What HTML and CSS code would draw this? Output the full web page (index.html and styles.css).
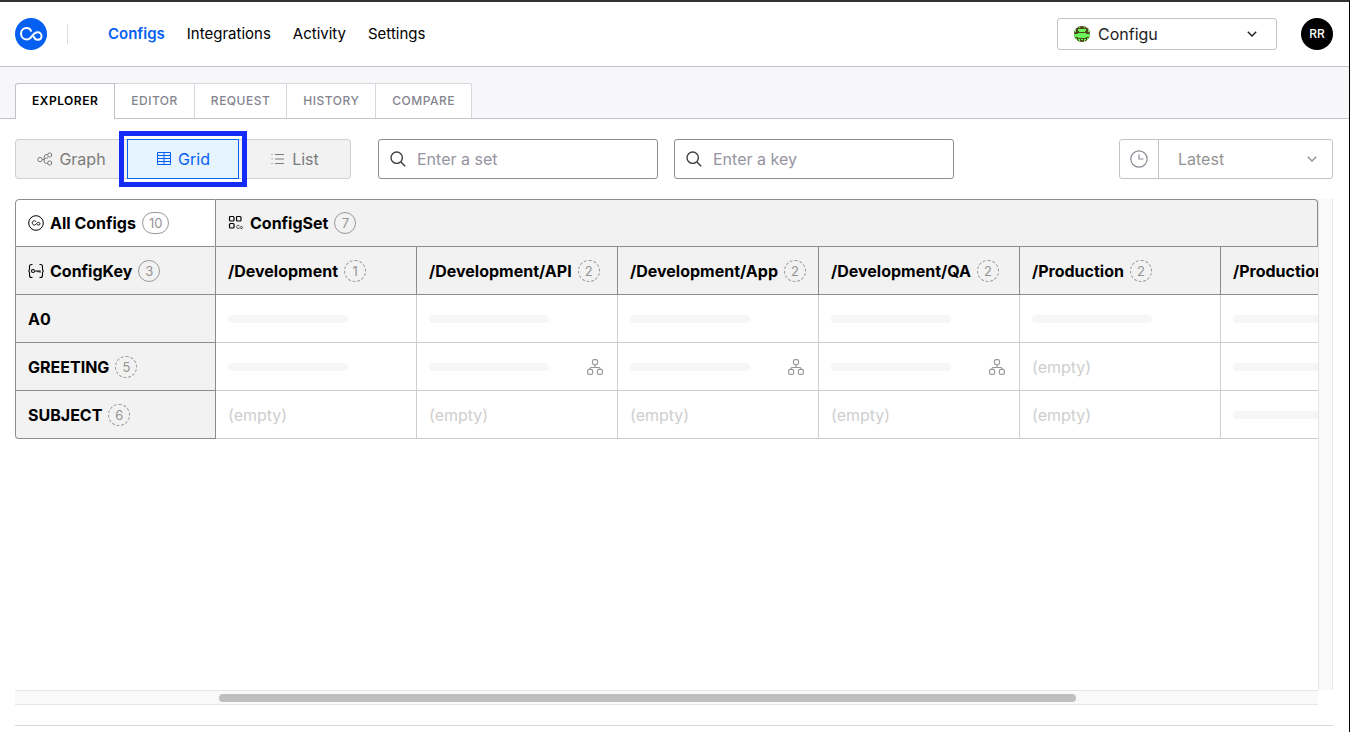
FILE: index.html
```html
<!DOCTYPE html>
<html lang="en">
<head>
<meta charset="utf-8">
<meta name="viewport" content="width=device-width, initial-scale=1">
<title>Configu - Explorer</title>
<link rel="stylesheet" href="styles.css">
</head>
<body>
<svg class="defs" aria-hidden="true">
  <symbol id="loop" viewBox="0 0 32 32">
    <path d="M16 12.800C15.300 11 13.600 10 11.600 10C8.300 10 6 12.500 6 15.600C6 19 8.500 21.600 12 21.600C17 21.600 17.500 14.200 22.500 14.200C25 14.200 26.500 16 26.500 18C26.500 20.200 24.900 21.800 22.800 21.800C20.900 21.800 19.500 20.700 19 19"/>
  </symbol>
  <symbol id="tree" viewBox="0 0 16 16">
    <g fill="none" stroke="currentColor" stroke-width="1.200" stroke-linejoin="round"><rect x="5.500" y=".6" width="5" height="5" rx="1.500"/><rect x=".6" y="10.400" width="5" height="5" rx="1.500"/><rect x="10.400" y="10.400" width="5" height="5" rx="1.500"/><path d="M8 5.500V8.500M3 10.500V9.500Q3 8.500 4 8.500H12Q13 8.500 13 9.500V10.500"/></g>
  </symbol>
  <symbol id="search" viewBox="0 0 16 16">
    <g fill="none" stroke="currentColor" stroke-width="1.400"><circle cx="6.700" cy="6.700" r="5.700"/><path d="M10.900 10.900L15.200 15.200"/></g>
  </symbol>
  <symbol id="chevron" viewBox="0 0 10 10">
    <path d="M.8 2.800L5 7L9.200 2.800" fill="none" stroke="currentColor" stroke-width="1.500"/>
  </symbol>
</svg>

<header class="topbar">
  <a class="brand" href="#" aria-label="Configu home"><svg class="brand-loop" viewBox="0 0 32 32"><use href="#loop"/></svg></a>
  <nav class="nav" aria-label="Main">
    <a class="nav-link active" href="#">Configs</a>
    <a class="nav-link" href="#">Integrations</a>
    <a class="nav-link" href="#">Activity</a>
    <a class="nav-link" href="#">Settings</a>
  </nav>
  <div class="org">
    <svg class="org-icon" viewBox="0 0 16 16" aria-hidden="true">
      <clipPath id="round"><circle cx="8" cy="8" r="8"/></clipPath>
      <g clip-path="url(#round)"><rect width="16" height="16" fill="#4e4a1d"/><path fill="#6bf75c" d="M5 1h1v1H5zM10 1h1v1h-1zM4 3h8v2h-1v1H5V5H4zM1 4h1v2H1zM14 4h1v2h-1zM0 8h4V7h8v1h4v3h-4v1H4v-1H0zM1 12h2v2H1zM13 12h2v2h-2zM4 13h2v3H5v-2H4zM10 13h2v1h-1v2h-1zM7 13h2v1H7z"/></g>
    </svg>
    <select class="org-select" aria-label="Organization"><option>Configu</option></select>
    <svg class="chevron" viewBox="0 0 10 10" aria-hidden="true"><use href="#chevron"/></svg>
  </div>
  <button class="avatar" type="button" aria-label="Account RR">RR</button>
</header>

<nav class="tabs" aria-label="Config views">
  <a class="tab active" href="#">Explorer</a>
  <a class="tab" href="#">Editor</a>
  <a class="tab" href="#">Request</a>
  <a class="tab" href="#">History</a>
  <a class="tab" href="#">Compare</a>
</nav>

<main class="main">
  <div class="toolbar">
    <div class="segments">
      <button class="segment" type="button">
        <svg class="icon" viewBox="0 0 16 16" aria-hidden="true"><g fill="none" stroke="currentColor"><circle cx="3" cy="8.500" r="2.200"/><circle cx="12.700" cy="4" r="2.100"/><circle cx="12.700" cy="12" r="2.100"/><path d="M5.200 8.500H7.200M10.600 3.500H9.500Q7.200 3.500 7.200 6V10Q7.200 12.500 9.500 12.500H10.600M7.200 8.500Q7.500 7 9.500 7H11"/></g></svg>Graph
      </button>
      <div class="focus-wrap">
        <button class="segment selected" type="button" aria-pressed="true">
          <svg class="icon" viewBox="0 0 16 16" aria-hidden="true"><path d="M1.500 1.500h13v12h-13zM1.500 4.500h13M1.500 7.500h13M1.500 10.500h13M8 1.500v12" fill="none" stroke="currentColor"/></svg>Grid
        </button>
        <span class="focus-ring"></span>
      </div>
      <button class="segment" type="button">
        <svg class="icon" viewBox="0 0 16 16" aria-hidden="true"><path d="M5 3.500h9M5 8h9M5 12.500h9" fill="none" stroke="currentColor" stroke-width="1.200"/><path d="M1.500 3.500h1M1.500 8h1M1.500 12.500h1" fill="none" stroke="currentColor"/></svg>List
      </button>
    </div>
    <label class="search"><svg class="icon" viewBox="0 0 16 16" aria-hidden="true"><use href="#search"/></svg><input class="search-input" type="text" placeholder="Enter a set" aria-label="Enter a set"></label>
    <label class="search"><svg class="icon" viewBox="0 0 16 16" aria-hidden="true"><use href="#search"/></svg><input class="search-input" type="text" placeholder="Enter a key" aria-label="Enter a key"></label>
    <div class="version">
      <span class="version-icon"><svg class="clock" viewBox="0 0 18 18" aria-hidden="true"><g fill="none" stroke="currentColor" stroke-width="1.200"><circle cx="9" cy="9" r="8.200"/><path d="M9 4.500V9H13.500"/></g></svg></span>
      <select class="version-select" aria-label="Version"><option>Latest</option></select>
      <svg class="chevron" viewBox="0 0 10 10" aria-hidden="true"><use href="#chevron"/></svg>
    </div>
  </div>

  <section class="viewer" aria-label="Config grid">
    <div class="viewport">
      <table class="grid">
        <colgroup><col class="col"><col class="col"><col class="col"><col class="col"><col class="col"><col class="col"><col></colgroup>
        <thead>
          <tr>
            <th class="all" scope="col"><div class="cell"><svg class="icon" viewBox="0 0 16 16" aria-hidden="true"><circle cx="8" cy="8" r="7.300" fill="none" stroke="currentColor"/><svg class="mini-loop" x="2" y="2" width="12" height="12" viewBox="0 0 32 32"><use href="#loop"/></svg></svg>All Configs<span class="count solid">10</span></div></th>
            <th scope="colgroup" colspan="6"><div class="cell"><svg class="icon" viewBox="0 0 16 16" aria-hidden="true"><g fill="none" stroke="currentColor" stroke-width="1.200"><rect x="1.500" y="1.500" width="4.500" height="4.500" rx="1"/><rect x="8.500" y="1.500" width="4.500" height="4.500" rx="1"/><rect x="1.500" y="8.500" width="4.500" height="4.500" rx="1"/></g><svg class="mini-loop" x="7" y="7.500" width="9" height="9" viewBox="0 0 32 32"><use href="#loop"/></svg></svg>ConfigSet<span class="count solid">7</span></div></th>
          </tr>
          <tr>
            <th scope="col"><div class="cell"><svg class="icon" viewBox="0 0 16 16" aria-hidden="true"><g fill="none" stroke="currentColor" stroke-width="1.100"><path d="M4.500 1.500H3.500Q1.500 1.500 1.500 3.500V6.500L.8 8L1.500 9.500V12.500Q1.500 14.500 3.500 14.500H4.500M11.500 1.500H12.500Q14.500 1.500 14.500 3.500V6.500L15.200 8L14.500 9.500V12.500Q14.500 14.500 12.500 14.500H11.500"/><path d="M6.500 7.300Q5.800 6.500 5 6.500Q3.500 6.500 3.500 8Q3.500 9.500 5 9.500Q6.300 9.500 7 8H12V9.700M10 8V9.300"/></g></svg>ConfigKey<span class="count solid">3</span></div></th>
            <th scope="col"><div class="cell">/Development<span class="count">1</span></div></th>
            <th scope="col"><div class="cell">/Development/API<span class="count">2</span></div></th>
            <th scope="col"><div class="cell">/Development/App<span class="count">2</span></div></th>
            <th scope="col"><div class="cell">/Development/QA<span class="count">2</span></div></th>
            <th scope="col"><div class="cell">/Production<span class="count">2</span></div></th>
            <th scope="col"><div class="cell">/Production</div></th>
          </tr>
        </thead>
        <tbody>
          <tr>
            <th scope="row"><div class="cell">A0</div></th>
            <td><div class="cell"><span class="bar"></span></div></td>
            <td><div class="cell"><span class="bar"></span></div></td>
            <td><div class="cell"><span class="bar"></span></div></td>
            <td><div class="cell"><span class="bar"></span></div></td>
            <td><div class="cell"><span class="bar"></span></div></td>
            <td><div class="cell"><span class="bar"></span></div></td>
          </tr>
          <tr>
            <th scope="row"><div class="cell">GREETING<span class="count">5</span></div></th>
            <td><div class="cell"><span class="bar"></span></div></td>
            <td><div class="cell"><span class="bar"></span><svg class="tree" viewBox="0 0 16 16" aria-hidden="true"><use href="#tree"/></svg></div></td>
            <td><div class="cell"><span class="bar"></span><svg class="tree" viewBox="0 0 16 16" aria-hidden="true"><use href="#tree"/></svg></div></td>
            <td><div class="cell"><span class="bar"></span><svg class="tree" viewBox="0 0 16 16" aria-hidden="true"><use href="#tree"/></svg></div></td>
            <td><div class="cell">(empty)</div></td>
            <td><div class="cell"><span class="bar"></span></div></td>
          </tr>
          <tr>
            <th scope="row"><div class="cell">SUBJECT<span class="count">6</span></div></th>
            <td><div class="cell">(empty)</div></td>
            <td><div class="cell">(empty)</div></td>
            <td><div class="cell">(empty)</div></td>
            <td><div class="cell">(empty)</div></td>
            <td><div class="cell">(empty)</div></td>
            <td><div class="cell"><span class="bar"></span></div></td>
          </tr>
        </tbody>
      </table>
    </div>
    <div class="track-y"></div>
    <div class="track-x"><div class="thumb"></div></div>
  </section>
</main>
</body>
</html>
```
FILE: styles.css
```css
* { box-sizing: border-box; }

body {
  margin: 0;
  min-height: 100vh;
  display: flex;
  flex-direction: column;
  border-top: 2px solid #333233;
  border-right: 1px solid #000;
  background: #fff;
  color: #000;
  font: 16px/24px Inter, "Liberation Sans", sans-serif;
}

a { color: inherit; text-decoration: none; }
button, input, select { font: inherit; color: inherit; }
svg { flex: none; }
.defs { position: absolute; width: 0; height: 0; }
.icon, .tree { width: 16px; height: 16px; }
.chevron { width: 10px; height: 10px; pointer-events: none; }

.topbar {
  height: 65px;
  display: flex;
  align-items: center;
  padding: 0 16px 0 15px;
  border-bottom: 1px solid #c3c2cb;
}
.brand {
  width: 32px;
  height: 32px;
  border-radius: 50%;
  background: #0560f2;
}
.brand-loop {
  display: block;
  fill: none;
  stroke: #fff;
  stroke-width: 2;
  stroke-linecap: round;
}
.mini-loop { fill: none; stroke: currentColor; stroke-width: 2.5; }
.nav {
  display: flex;
  gap: 22px;
  margin-left: 20px;
  padding-left: 40px;
  font-size: 15px;
  line-height: 20px;
  border-left: 1px solid #dcdbe0;
}
.nav-link.active { color: #0560f2; font-weight: 600; }
.org {
  width: 220px;
  height: 32px;
  margin-left: auto;
  display: flex;
  align-items: center;
  gap: 8px;
  padding: 0 19px 0 16px;
  border: 1px solid #c3c2cb;
  border-radius: 3px;
  color: #222;
}
.org-icon { width: 16px; height: 16px; }
.org-select, .version-select {
  flex: 1;
  min-width: 0;
  padding: 0;
  border: 0;
  outline: 0;
  appearance: none;
  background: transparent;
}
.avatar {
  width: 32px;
  height: 32px;
  margin-left: 24px;
  padding: 0;
  border: 0;
  border-radius: 50%;
  background: #000;
  color: #fff;
  font-size: 12px;
  font-weight: 500;
}

.tabs {
  height: 52px;
  display: flex;
  align-items: flex-end;
  padding: 0 15px;
  border-bottom: 1px solid #c3c2cb;
  background: #f7f7fa;
}
.tab {
  height: 35px;
  padding: 0 16px;
  border: 1px solid #d8d7de;
  border-width: 1px 1px 0 0;
  background: #fff;
  color: #85848e;
  font-size: 12px;
  font-weight: 500;
  line-height: 34px;
  letter-spacing: 0.5px;
  text-transform: uppercase;
}
.tab:last-child { border-top-right-radius: 3px; }
.tab.active {
  height: 36px;
  margin-bottom: -1px;
  border-color: #c3c2cb;
  border-left-width: 1px;
  border-radius: 3px 0 0 0;
  color: #000;
  font-weight: 600;
}

.main {
  flex: 1;
  display: flex;
  flex-direction: column;
  gap: 20px;
  margin: 0 16px 6px 15px;
  padding: 20px 0;
  border-bottom: 1px solid #d9d9d9;
}
.toolbar { display: flex; align-items: center; }
.segments {
  width: 336px;
  display: grid;
  grid-template-columns: repeat(3, 1fr);
  margin-right: 27px;
}
.segment {
  flex: 1;
  height: 40px;
  display: flex;
  align-items: center;
  justify-content: center;
  gap: 6px;
  padding: 0;
  border: 1px solid #d0d0d0;
  border-right: 0;
  border-radius: 4px 0 0 4px;
  background: #f2f2f2;
  color: #7c7c7c;
}
.segment:last-child { border-width: 1px 1px 1px 0; border-right: 1px solid #d0d0d0; border-radius: 0 4px 4px 0; }
.focus-wrap { display: flex; position: relative; }
.segment.selected {
  border: 1px solid #0560f2;
  border-radius: 0;
  background: #e6f4ff;
  color: #0560f2;
}
.focus-ring {
  position: absolute;
  inset: -8px;
  border: 5px solid #152cf8;
  pointer-events: none;
}
.search {
  width: 280px;
  height: 40px;
  display: flex;
  align-items: center;
  gap: 11px;
  margin-right: 16px;
  padding: 0 11px;
  border: 1px solid #8c8c8c;
  border-radius: 3px;
  color: #3e3e3e;
}
.search-input {
  flex: 1;
  min-width: 0;
  padding: 0;
  border: 0;
  outline: 0;
  background: transparent;
}
.search-input::placeholder { color: #96949f; opacity: 1; }
.version {
  width: 214px;
  height: 40px;
  margin-left: auto;
  display: flex;
  align-items: center;
  padding-right: 15px;
  border: 1px solid #c3c2cb;
  border-radius: 3px;
  color: #949494;
}
.version-icon {
  width: 39px;
  height: 100%;
  display: flex;
  align-items: center;
  justify-content: center;
  margin-right: 19px;
  border-right: 1px solid #c3c2cb;
}
.clock { width: 18px; height: 18px; color: #8b8a94; }

.viewer {
  flex: 1;
  display: grid;
  grid-template-columns: minmax(0, 1fr) 15px;
  grid-template-rows: 1fr 15px;
}
.viewport { overflow: hidden; }
.grid {
  width: 100%;
  table-layout: fixed;
  border-collapse: separate;
  border-spacing: 0;
}
.col { width: 201px; }
.grid th, .grid td {
  height: 48px;
  padding: 0;
  border: 0 solid #cecece;
  border-width: 0 1px 1px 0;
  overflow: hidden;
  text-align: left;
}
.grid th {
  border-color: #8c8c8c;
  background: #f2f2f2;
  font-weight: 700;
}
.grid th:first-child { border-left-width: 1px; }
.grid thead tr:first-child th { border-top-width: 1px; }
.grid thead tr:first-child th:last-child { border-top-right-radius: 4px; }
.grid thead tr:first-child .all { border-top-left-radius: 4px; background: #fff; }
.grid tbody tr:last-child th { border-bottom-left-radius: 4px; }
.grid tr:not(:first-child) > :last-child,
.grid tbody tr > :last-child { border-right-width: 0; }
.grid td { color: #cecece; }
.cell {
  display: flex;
  align-items: center;
  gap: 6px;
  padding: 0 12px;
  white-space: nowrap;
}
.count {
  min-width: 22px;
  height: 22px;
  padding: 0 6px;
  border: 1px dashed #999;
  border-radius: 11px;
  color: #949494;
  font-size: 13px;
  font-weight: 400;
  line-height: 20px;
  text-align: center;
}
.count.solid { border-style: solid; }
.bar {
  flex: none;
  width: 120px;
  height: 8px;
  border-radius: 4px;
  background: #f6f6f6;
}
.tree { margin: 0 2px 0 auto; color: #999; }
.track-y {
  border: 1px solid #e6e6e6;
  border-width: 0 1px;
  background: #f9f9f9;
}
.track-x {
  display: flex;
  align-items: center;
  padding-left: 204px;
  border: 1px solid #e6e6e6;
  border-width: 1px 0;
  background: #f9f9f9;
}
.thumb {
  width: 78%;
  height: 8px;
  border-radius: 4px;
  background: #bfbfbf;
}
```
